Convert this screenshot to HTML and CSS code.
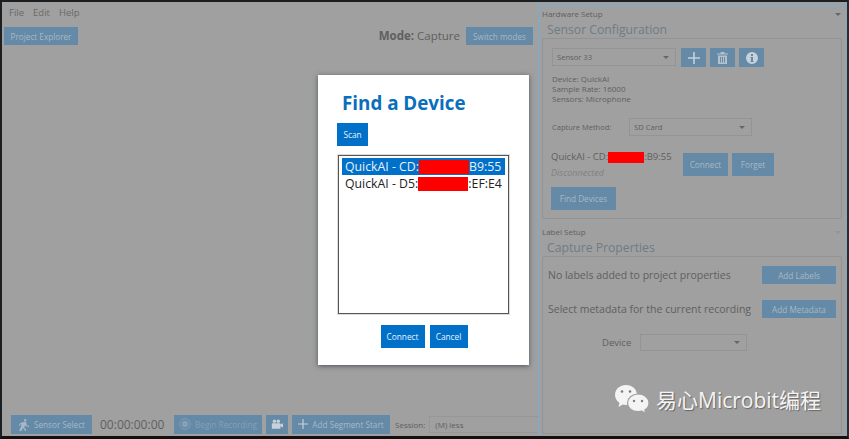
FILE: index.html
```html
<!DOCTYPE html>
<html lang="en">
<head>
    <meta charset="UTF-8">
    <title>Capture</title>
    <link rel="stylesheet" href="styles.css">
</head>
<body>
<div class="frame">
    <div class="left-pane">
        <div class="menu">
            <span>File</span>
            <span>Edit</span>
            <span>Help</span>
        </div>
        <div class="top-row">
            <button class="btn explorer">Project Explorer</button>
            <div class="mode"><b>Mode:</b> Capture</div>
            <button class="btn switch">Switch modes</button>
        </div>
        <div class="bottom-row">
            <button class="btn sensor-select">
                <svg width="12" height="13" viewBox="0 0 15 16"><path d="M9 1a1.600 1.600 0 1 1 0 3.200a1.600 1.600 0 0 1 0-3.200zM7 5l3 0 1 4 3 1-.5 1-4-1-1-1-.5 3 2 2 0 2-1.500 0-.5-2-2-1.500-1.500 3.500-3 0 2-5 1-4-1.500 1-1 2-1-.5 1.500-3z" fill="#a8b8c4"/></svg>
                Sensor Select
            </button>
            <span class="timer">00:00:00:00</span>
            <button class="btn begin">
                <svg width="12" height="12" viewBox="0 0 13 13"><circle cx="6.500" cy="6.500" r="5.800" fill="none" stroke="#86a0b4"/><circle cx="6.500" cy="6.500" r="3.500" fill="#86a0b4"/></svg>
                Begin Recording
            </button>
            <button class="btn camera">
                <svg width="12" height="10" viewBox="0 0 14 11"><circle cx="4" cy="2.200" r="2" fill="#c6d1d9"/><circle cx="8.500" cy="2.200" r="2" fill="#c6d1d9"/><path d="M1 4.500h10v1.500l3-1.500v5l-3-1.500v3h-10z" fill="#c6d1d9"/></svg>
            </button>
            <button class="btn segment">
                <svg width="10" height="10" viewBox="0 0 11 11"><path d="M5.500 0v11M0 5.500h11" stroke="#c6d1d9" stroke-width="1.300"/></svg>
                Add Segment Start
            </button>
            <span class="session-label">Session:</span>
            <div class="session-input">(M) less</div>
        </div>
    </div>

    <div class="right-pane">
        <div class="section hardware">
            <div class="section-label">Hardware Setup<i class="caret"></i></div>
            <h2>Sensor Configuration</h2>
            <div class="card sensor-card">
                <div class="sensor-row">
                    <div class="select sensor-pick">Sensor 33<i class="caret"></i></div>
                    <button class="btn icon-btn">
                        <svg width="12" height="12" viewBox="0 0 12 12"><path d="M6 0v12M0 6h12" stroke="#c6d1d9" stroke-width="1.600"/></svg>
                    </button>
                    <button class="btn icon-btn">
                        <svg width="11" height="12" viewBox="0 0 11 12"><path d="M0 1.500h11v1h-11zM3.500 0h4v1.500h-4zM1 3.500h9v8.500h-9zM3 5v5.500h1v-5.500zM5 5v5.500h1v-5.500zM7 5v5.500h1v-5.500z" fill="#b4c2cc" fill-rule="evenodd"/></svg>
                    </button>
                    <button class="btn icon-btn">
                        <svg width="12" height="12" viewBox="0 0 12 12"><path d="M6 0a6 6 0 1 1 0 12a6 6 0 0 1 0-12zM5 2v2h2v-2zM4.500 5v1h.5v3h-.5v1h3v-1h-.5v-4z" fill="#c6d1d9" fill-rule="evenodd"/></svg>
                    </button>
                </div>
                <div class="sensor-info">
                    <div>Device: QuickAI</div>
                    <div>Sample Rate: 16000</div>
                    <div>Sensors: Microphone</div>
                </div>
                <div class="method-row">
                    <span class="method-label">Capture Method:</span>
                    <div class="select method-pick">SD Card<i class="caret"></i></div>
                </div>
                <div class="device-row">
                    <div class="device-text">
                        <div class="device-name">QuickAI - CD:<span class="redact dim-redact"></span>:B9:55</div>
                        <div class="status">Disconnected</div>
                    </div>
                    <button class="btn connect-small">Connect</button>
                    <button class="btn forget">Forget</button>
                </div>
                <button class="btn find">Find Devices</button>
            </div>
        </div>
        <div class="section labels">
            <div class="section-label">Label Setup<i class="caret faint"></i></div>
            <h2>Capture Properties</h2>
            <div class="card props-card">
                <div class="prop-row">
                    <span>No labels added to project properties</span>
                    <button class="btn add">Add Labels</button>
                </div>
                <div class="prop-row">
                    <span>Select metadata for the current recording</span>
                    <button class="btn add">Add Metadata</button>
                </div>
                <div class="meta-row">
                    <span>Device</span>
                    <div class="select meta-pick"><i class="caret"></i></div>
                </div>
            </div>
        </div>
    </div>
</div>

<div class="modal">
    <h1>Find a Device</h1>
    <button class="modal-btn scan">Scan</button>
    <div class="listbox">
        <div class="list-item selected">QuickAI - CD:<span class="redact wide"></span>B9:55</div>
        <div class="list-item">QuickAI - D5:<span class="redact wide"></span>:EF:E4</div>
    </div>
    <div class="modal-actions">
        <button class="modal-btn connect">Connect</button>
        <button class="modal-btn cancel">Cancel</button>
    </div>
</div>

<div class="watermark">
    <svg width="36" height="30" viewBox="0 0 36 30">
        <path d="M12 1c6.200 0 11 4.300 11 10s-4.800 10-11 10c-1.200 0-2.300-.2-3.300-.5l-4.200 2.500 1-4C2.800 17 1 14.200 1 11 1 5.300 5.800 1 12 1z" fill="#f4f4f4"/>
        <path d="M24 10c6 0 11 4 11 9 0 3-1.700 5.500-4.200 7l1 3.500-4-2.300c-1.200.3-2.500.5-3.800.5-6 0-10.500-4-10.500-8.700S18 10 24 10z" fill="#f4f4f4" stroke="#a0a0a0" stroke-width="1.200"/>
        <circle cx="8" cy="7.500" r="1.300" fill="#7c7c7c"/><circle cx="16" cy="7.500" r="1.300" fill="#7c7c7c"/>
        <circle cx="20" cy="17" r="1.200" fill="#7c7c7c"/><circle cx="28" cy="17" r="1.200" fill="#7c7c7c"/>
    </svg>
    <span>易心Microbit编程</span>
</div>
</body>
</html>
```
FILE: styles.css
```css
* {
    box-sizing: border-box;
}
html, body {
    height: 100%;
}
body {
    margin: 0;
    overflow: hidden;
    background: #a0a0a0;
    color: #5f5f5f;
    font-family: "Open Sans", "Noto Sans", sans-serif;
}
.frame {
    display: flex;
    height: 439px;
    border-top: 2px solid #1c1f22;
    border-left: 2px solid #1c1f22;
    border-right: 2px solid #2a2d30;
    border-bottom: 3px solid #111;
}

/* left side */
.left-pane {
    width: 536px;
    display: flex;
    flex-direction: column;
    padding-left: 2px;
}
.menu {
    display: flex;
    gap: 9px;
    padding: 4px 0 0 5px;
    height: 25px;
    font-size: 9.500px;
    line-height: 14px;
    color: #6a6a6a;
}
.top-row {
    display: flex;
    align-items: flex-start;
    padding-right: 5px;
    height: 20px;
}
.btn {
    border: none;
    padding: 0;
    background: #648aa7;
    color: #a8b8c4;
    font-family: inherit;
    font-size: 8.200px;
    display: flex;
    align-items: center;
    justify-content: center;
    gap: 4px;
}
.explorer {
    width: 74px;
    height: 18px;
}
.mode {
    margin-left: auto;
    margin-right: 6px;
    font-size: 11.500px;
    line-height: 17px;
}
.switch {
    width: 67px;
    height: 18px;
}
.bottom-row {
    margin-top: auto;
    display: flex;
    align-items: center;
    height: 20px;
    margin-bottom: 2px;
    padding-left: 7px;
}
.sensor-select {
    width: 81px;
    height: 19px;
}
.timer {
    margin-left: 8px;
    font-size: 12px;
    width: 74px;
}
.begin {
    width: 88px;
    height: 19px;
    color: #86a0b4;
}
.camera {
    width: 22px;
    height: 19px;
    margin-left: 4px;
}
.segment {
    width: 98px;
    height: 19px;
    margin-left: 4px;
}
.session-label {
    margin-left: 5px;
    font-size: 8px;
}
.session-input {
    flex: 1;
    height: 17px;
    margin-left: 4px;
    padding-left: 5px;
    border: 1px solid #979797;
    border-right: none;
    font-size: 8px;
    line-height: 15px;
}

/* right side */
.right-pane {
    flex: 1;
    border-left: 2px solid #8aa8bd;
    border-right: 1px solid #8aa8bd;
    padding-top: 3px;
    display: flex;
    flex-direction: column;
}
.section {
    padding: 0 4px 0 2px;
}
.hardware {
    border-top: 2px solid #8aa8bd;
}
.section-label {
    display: flex;
    justify-content: space-between;
    align-items: center;
    font-size: 8px;
    line-height: 14px;
    padding-right: 1px;
}
.labels .section-label {
    padding-top: 2px;
}
h2 {
    margin: 0;
    padding-left: 5px;
    font-size: 12.200px;
    font-weight: 400;
    line-height: 17px;
    color: #6e7c86;
}
.card {
    border: 1px solid #939393;
    border-radius: 2px;
}
.sensor-card {
    height: 181px;
    padding: 9px 9px 0;
}
.caret {
    width: 0;
    height: 0;
    border-left: 3px solid transparent;
    border-right: 3px solid transparent;
    border-top: 3px solid #666;
}
.caret.faint {
    border-top-color: #949494;
}
.select {
    display: flex;
    justify-content: space-between;
    align-items: center;
    border: 1px solid #949494;
    font-size: 7.600px;
    padding: 0 6px 0 4px;
}
.sensor-row {
    display: flex;
    gap: 4px;
}
.sensor-pick {
    width: 124px;
    height: 18px;
    margin-right: 1px;
}
.icon-btn {
    width: 25px;
    height: 19px;
}
.sensor-info {
    margin-top: 7px;
    font-size: 8px;
    line-height: 10px;
}
.method-row {
    display: flex;
    align-items: center;
    margin-top: 14px;
}
.method-label {
    width: 77px;
    font-size: 7.500px;
}
.method-pick {
    width: 123px;
    height: 18px;
}
.device-row {
    display: flex;
    align-items: flex-start;
    margin-top: 17px;
}
.device-text {
    width: 131px;
    margin-top: -3px;
}
.device-name {
    display: flex;
    align-items: center;
    margin-left: -1px;
    font-size: 9.500px;
    line-height: 14px;
}
.status {
    margin-top: 3px;
    margin-left: -1px;
    font-size: 9px;
    line-height: 12px;
    font-style: italic;
    color: #818181;
}
.connect-small {
    width: 45px;
    height: 23px;
}
.forget {
    width: 42px;
    height: 23px;
    margin-left: 4px;
}
.find {
    width: 65px;
    height: 23px;
    margin-left: -1px;
    margin-top: 8px;
}
.labels {
    margin-top: 4px;
}
.props-card {
    height: 178px;
    padding: 9px 5px 0 5px;
}
.prop-row {
    display: flex;
    justify-content: space-between;
    align-items: center;
    height: 18px;
    margin-bottom: 16px;
    font-size: 10.500px;
}
.add {
    width: 74px;
    height: 18px;
}
.meta-row {
    display: flex;
    align-items: center;
    font-size: 9.500px;
    margin-left: 54px;
}
.meta-pick {
    justify-content: flex-end;
    width: 107px;
    height: 17px;
    margin-left: 9px;
}
.redact {
    display: inline-block;
    background: #f00;
}
.dim-redact {
    width: 36px;
    height: 11px;
}

/* dialog on top */
.modal {
    position: absolute;
    left: 318px;
    top: 75px;
    width: 211px;
    height: 290px;
    padding: 14px 19px 0;
    background: #fff;
    box-shadow: 0 1px 5px rgba(40, 50, 60, .7);
}
h1 {
    margin: 0 0 6px 5px;
    font-size: 18.800px;
    line-height: 28px;
    font-weight: 700;
    color: #0a6ebd;
}
.modal-btn {
    height: 23px;
    padding: 0;
    border: none;
    background: #0070c8;
    color: #e8f2fa;
    font-family: inherit;
    font-size: 8.300px;
}
.scan {
    width: 31px;
    display: block;
}
.listbox {
    width: 171px;
    height: 159px;
    margin: 9px 0 0 1px;
    padding: 2px 3px;
    border: 1px solid #555;
    box-shadow: 0 0 0 1px #ddd;
}
.list-item {
    display: flex;
    align-items: center;
    height: 17px;
    padding-left: 3px;
    font-size: 12.300px;
    color: #222;
}
.list-item.selected {
    background: #0070c8;
    color: #e8f2fa;
}
.redact.wide {
    width: 50px;
    height: 14px;
}
.modal-actions {
    display: flex;
    justify-content: center;
    gap: 5px;
    margin-top: 11px;
    padding-left: 1px;
}
.connect {
    width: 44px;
}
.cancel {
    width: 38px;
}

.watermark {
    position: absolute;
    left: 614px;
    top: 384px;
    display: flex;
    align-items: center;
    gap: 6px;
    color: #f4f4f4;
    font-family: "Open Sans", "Noto Sans CJK SC", sans-serif;
    font-size: 21px;
    text-shadow: 1px 1px 1px #666;
}
```
